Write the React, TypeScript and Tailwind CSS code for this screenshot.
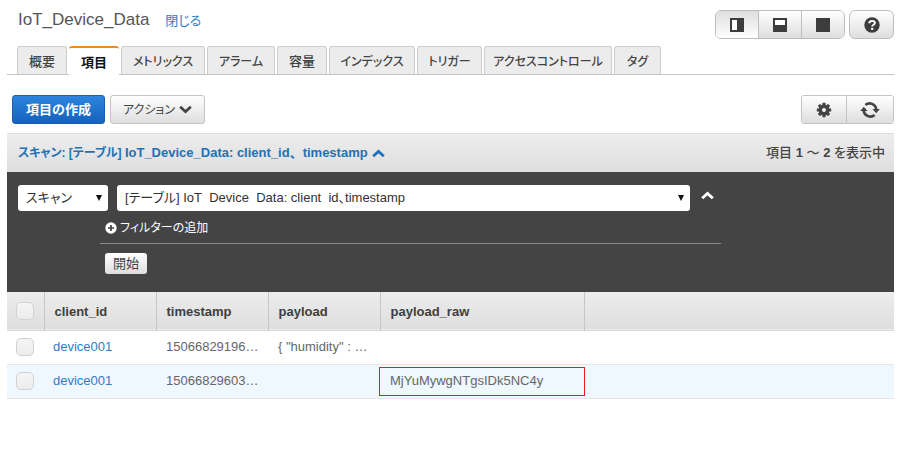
import type { ReactNode } from 'react';

const tabs = [
  { label: '概要', width: 'w-[50px]' },
  { label: '項目', width: 'w-[50px]', active: true },
  { label: 'メトリックス', width: 'w-[84px]', kana: true },
  { label: 'アラーム', width: 'w-[68px]', kana: true },
  { label: '容量', width: 'w-[50px]' },
  { label: 'インデックス', width: 'w-[86px]', kana: true },
  { label: 'トリガー', width: 'w-[65px]', kana: true },
  { label: 'アクセスコントロール', width: 'w-[128px]', kana: true },
  { label: 'タグ', width: 'w-[47px]', kana: true },
];

const rows = [
  { id: 'device001', timestamp: '15066829196…', payload: '{ "humidity" : …', raw: '' },
  { id: 'device001', timestamp: '15066829603…', payload: '', raw: 'MjYuMywgNTgsIDk5NC4y' },
];

function Chevron({ up = false }: { up?: boolean }) {
  return (
    <svg viewBox="0 0 13 9" className="h-[9px] w-[13px] shrink-0" aria-hidden="true">
      <path
        d={up ? 'M1.2 7.3 L6.5 2.4 L11.8 7.3' : 'M1.2 1.8 L6.5 6.7 L11.8 1.8'}
        fill="none"
        stroke="currentColor"
        strokeWidth="2.8"
      />
    </svg>
  );
}

function PaneIcon({ kind }: { kind: 'side' | 'bottom' | 'full' }) {
  return (
    <svg viewBox="0 0 14 14" className="size-[14px]" aria-hidden="true">
      <rect width="14" height="14" fill="#3c3c3c" />
      {kind === 'side' && <rect x="2" y="2" width="5" height="10" fill="#fff" />}
      {kind === 'bottom' && <rect x="2" y="2" width="10" height="5" fill="#fff" />}
    </svg>
  );
}

function HelpIcon() {
  return (
    <svg viewBox="0 0 16 16" className="size-[16px]" aria-hidden="true">
      <circle cx="8" cy="8" r="7.7" fill="#3c3c3c" />
      <path
        d="M5.2 6.3 C5.2 3.2 10.9 3.1 10.9 6 C10.9 7.8 8.2 7.7 8.2 9.6"
        fill="none"
        stroke="#fff"
        strokeWidth="2"
      />
      <rect x="7.1" y="10.8" width="2.2" height="2.1" fill="#fff" />
    </svg>
  );
}

function CogIcon() {
  return (
    <svg viewBox="0 0 16 16" className="size-[16px]" aria-hidden="true">
      <g fill="#444">
        {[0, 45, 90, 135].map((angle) => (
          <rect key={angle} x="6.4" y="0.8" width="3.2" height="14.4" rx="0.6" transform={`rotate(${angle} 8 8)`} />
        ))}
        <circle cx="8" cy="8" r="5.5" />
      </g>
      <circle cx="8" cy="8" r="2" fill="#f2f2f2" />
    </svg>
  );
}

function RefreshIcon() {
  return (
    <svg viewBox="0 0 20 18" className="h-[18px] w-[20px]" aria-hidden="true">
      <g fill="none" stroke="#444" strokeWidth="2.6">
        <path d="M5.4 4.1 A6.6 6.6 0 0 1 16.3 8.2" />
        <path d="M14.6 13.9 A6.6 6.6 0 0 1 3.7 9.8" />
      </g>
      <path d="M12.4 8 L19.8 8 L16.2 12.2 Z" fill="#444" />
      <path d="M0.2 10 L7.6 10 L3.8 5.8 Z" fill="#444" />
    </svg>
  );
}

function SelectBox({ id, label, value, width }: { id: string; label: string; value: string; width: string }) {
  return (
    <div className={`relative ${width}`}>
      <label htmlFor={id} className="sr-only">
        {label}
      </label>
      <select
        id={id}
        className="block h-[26px] w-full appearance-none rounded-[3px] bg-white py-0 pr-5 pl-[8px] text-[13px] leading-[26px] text-[#333]"
      >
        <option>{value}</option>
      </select>
      <svg viewBox="0 0 6 6" className="pointer-events-none absolute top-[10px] right-[6px] size-[6px]" aria-hidden="true">
        <path d="M0 0 H6 L3 6 Z" fill="#111" />
      </svg>
    </div>
  );
}

const grey = 'bg-linear-to-b from-white to-[#dedede]';

function GroupButton({ label, className, children }: { label: string; className: string; children: ReactNode }) {
  return (
    <button type="button" aria-label={label} className={`flex items-center justify-center ${className}`}>
      {children}
    </button>
  );
}

function Check({ label }: { label: string }) {
  return (
    <input
      type="checkbox"
      aria-label={label}
      className="ml-[9px] block size-[18px] appearance-none rounded-[5px] border border-[#d2d2d2] bg-linear-to-b from-[#f5f5f5] to-[#ececec]"
    />
  );
}

export default function App() {
  const th =
    'border-r border-l border-r-[#c6c6c6] border-l-[#fafafa] pt-[3px] pl-[10px] text-left font-bold text-[#3f3f3f]';
  return (
    <main
      lang="ja"
      className="min-h-screen bg-white pr-[6px] pl-[7px] font-['Liberation_Sans','Noto_Sans_CJK_JP',sans-serif] text-[13px] leading-[18px] text-[#444] [font-feature-settings:'palt']"
    >
      <header className="flex h-[46px] items-start justify-between pt-[10px] pl-[11px]">
        <div className="flex items-baseline gap-[16px]">
          <h1 className="text-[17px] leading-[20px] text-[#555]">IoT_Device_Data</h1>
          <a href="#close" className="text-[13px] text-[#2f7dc0]">
            閉じる
          </a>
        </div>
        <div className="flex gap-1">
          <div className="flex h-[29px] overflow-hidden rounded-[6px] border border-[#bdbdbd]">
            <GroupButton label="右に表示" className="w-[42px] bg-linear-to-b from-[#dedede] to-white">
              <PaneIcon kind="side" />
            </GroupButton>
            <GroupButton label="下に表示" className={`w-[43px] border-l border-[#bdbdbd] ${grey}`}>
              <PaneIcon kind="bottom" />
            </GroupButton>
            <GroupButton label="全体に表示" className={`w-[43px] border-l border-[#bdbdbd] ${grey}`}>
              <PaneIcon kind="full" />
            </GroupButton>
          </div>
          <GroupButton label="ヘルプ" className={`h-[29px] w-[45px] rounded-[6px] border border-[#bdbdbd] ${grey}`}>
            <HelpIcon />
          </GroupButton>
        </div>
      </header>

      <nav role="tablist" className="flex h-[29px] gap-[2px] border-b border-[#c4c4c4] pl-[10px]">
        {tabs.map((tab) => (
          <button
            key={tab.label}
            type="button"
            role="tab"
            aria-selected={!!tab.active}
            className={`shrink-0 rounded-t-[3px] pt-[2px] whitespace-nowrap ${tab.width} ${tab.kana ? 'text-[12px]' : 'text-[13px]'} ${
              tab.active
                ? '-mb-px border-t-2 border-[#ef8a1d] bg-white font-bold text-[#111]'
                : 'border border-b-0 border-[#cdcdcd] bg-[#ececec] font-medium text-[#444]'
            }`}
          >
            {tab.label}
          </button>
        ))}
      </nav>

      <div className="flex items-center justify-between pt-[20px] pb-[9px] pl-[5px]">
        <div className="flex gap-[5px]">
          <button
            type="button"
            className="h-[29px] w-[93px] rounded-[3px] border border-[#1a5fae] bg-linear-to-b from-[#2d84de] to-[#1562bb] font-bold text-white"
          >
            項目の作成
          </button>
          <button
            type="button"
            className={`flex h-[29px] w-[95px] items-center justify-center gap-1 rounded-[3px] border border-[#c4c4c4] text-[12px] ${grey}`}
          >
            アクション
            <Chevron />
          </button>
        </div>
        <div className="flex h-[29px] overflow-hidden rounded-[3px] border border-[#c4c4c4]">
          <GroupButton label="設定" className={`w-[44px] ${grey}`}>
            <CogIcon />
          </GroupButton>
          <GroupButton label="更新" className={`w-[47px] border-l border-[#c4c4c4] ${grey}`}>
            <RefreshIcon />
          </GroupButton>
        </div>
      </div>

      <section>
        <div className="flex h-[39px] items-center justify-between border-t border-[#dcdcdc] bg-linear-to-b from-[#ededed] to-[#dedede] pr-[9px] pl-[11px] font-bold">
          <button type="button" aria-expanded="true" className="flex items-center gap-1 text-[#1f71b8]">
            <span>
              <span className="text-[12px]">スキャン: [テーブル] </span>
              IoT_Device_Data: client_id<span className="[font-feature-settings:normal]">、</span>timestamp
            </span>
            <Chevron up />
          </button>
          <span className="font-medium">
            項目 <b>1</b> ～ <b>2</b> を表示中
          </span>
        </div>

        <form className="h-[120px] bg-[#444] pt-[13px] pr-[173px] pl-[11px] text-white" onSubmit={(e) => e.preventDefault()}>
          <div className="flex">
            <SelectBox id="mode" label="操作" value="スキャン" width="mr-[9px] w-[90px]" />
            <SelectBox
              id="target"
              label="対象"
              value={'[テーブル] IoT\u00a0\u00a0Device\u00a0\u00a0Data: client\u00a0\u00a0id、timestamp'}
              width="flex-1"
            />
            <button type="button" aria-label="折りたたむ" className="ml-[11px] flex w-[20px] pt-[6px]">
              <Chevron up />
            </button>
          </div>
          <div className="ml-[82px] border-b border-[#8a8a8a] pt-[8px] pb-[6px] pl-[5px]">
            <button type="button" className="flex items-center gap-[3px] text-[12px] leading-[18px]">
              <svg viewBox="0 0 12 12" className="size-[12px]" aria-hidden="true">
                <circle cx="6" cy="6" r="5.7" fill="#fff" />
                <path d="M6 3 V9 M3 6 H9" stroke="#444" strokeWidth="1.7" />
              </svg>
              フィルターの追加
            </button>
          </div>
          <button
            type="submit"
            className={`mt-[9px] ml-[87px] block h-[21px] w-[42px] rounded-[3px] text-[#444] ${grey}`}
          >
            開始
          </button>
        </form>

        <table className="w-full table-fixed border-collapse">
          <colgroup>
            <col className="w-[37px]" />
            <col className="w-[112px]" />
            <col className="w-[112px]" />
            <col className="w-[112px]" />
            <col className="w-[204px]" />
            <col />
          </colgroup>
          <thead>
            <tr className="h-[38px] border-b border-[#d8d8d8] bg-linear-to-b from-[#ededed] to-[#dedede]">
              <th className="border-r border-[#c6c6c6] p-0">
                <Check label="すべて選択" />
              </th>
              <th className={th}>client_id</th>
              <th className={th}>timestamp</th>
              <th className={th}>payload</th>
              <th className={th}>payload_raw</th>
              <td />
            </tr>
          </thead>
          <tbody>
            {rows.map((row) => (
              <tr key={row.timestamp} className="h-[34px] border-b border-[#e6e6e6] text-[#666] even:bg-[#eff7ff]">
                <td className="p-0">
                  <Check label={`${row.timestamp} を選択`} />
                </td>
                <td className="pl-[9px]">
                  <a href="#item" className="text-[#2a7fc1]">
                    {row.id}
                  </a>
                </td>
                <td className="pl-[10px] whitespace-nowrap">{row.timestamp}</td>
                <td className="pl-[10px] whitespace-nowrap">{row.payload}</td>
                <td className="p-0">
                  {row.raw && (
                    <div className="-mx-px flex h-[29px] items-center border border-[#f01818] pl-[10px]">{row.raw}</div>
                  )}
                </td>
                <td />
              </tr>
            ))}
          </tbody>
        </table>
      </section>
    </main>
  );
}
